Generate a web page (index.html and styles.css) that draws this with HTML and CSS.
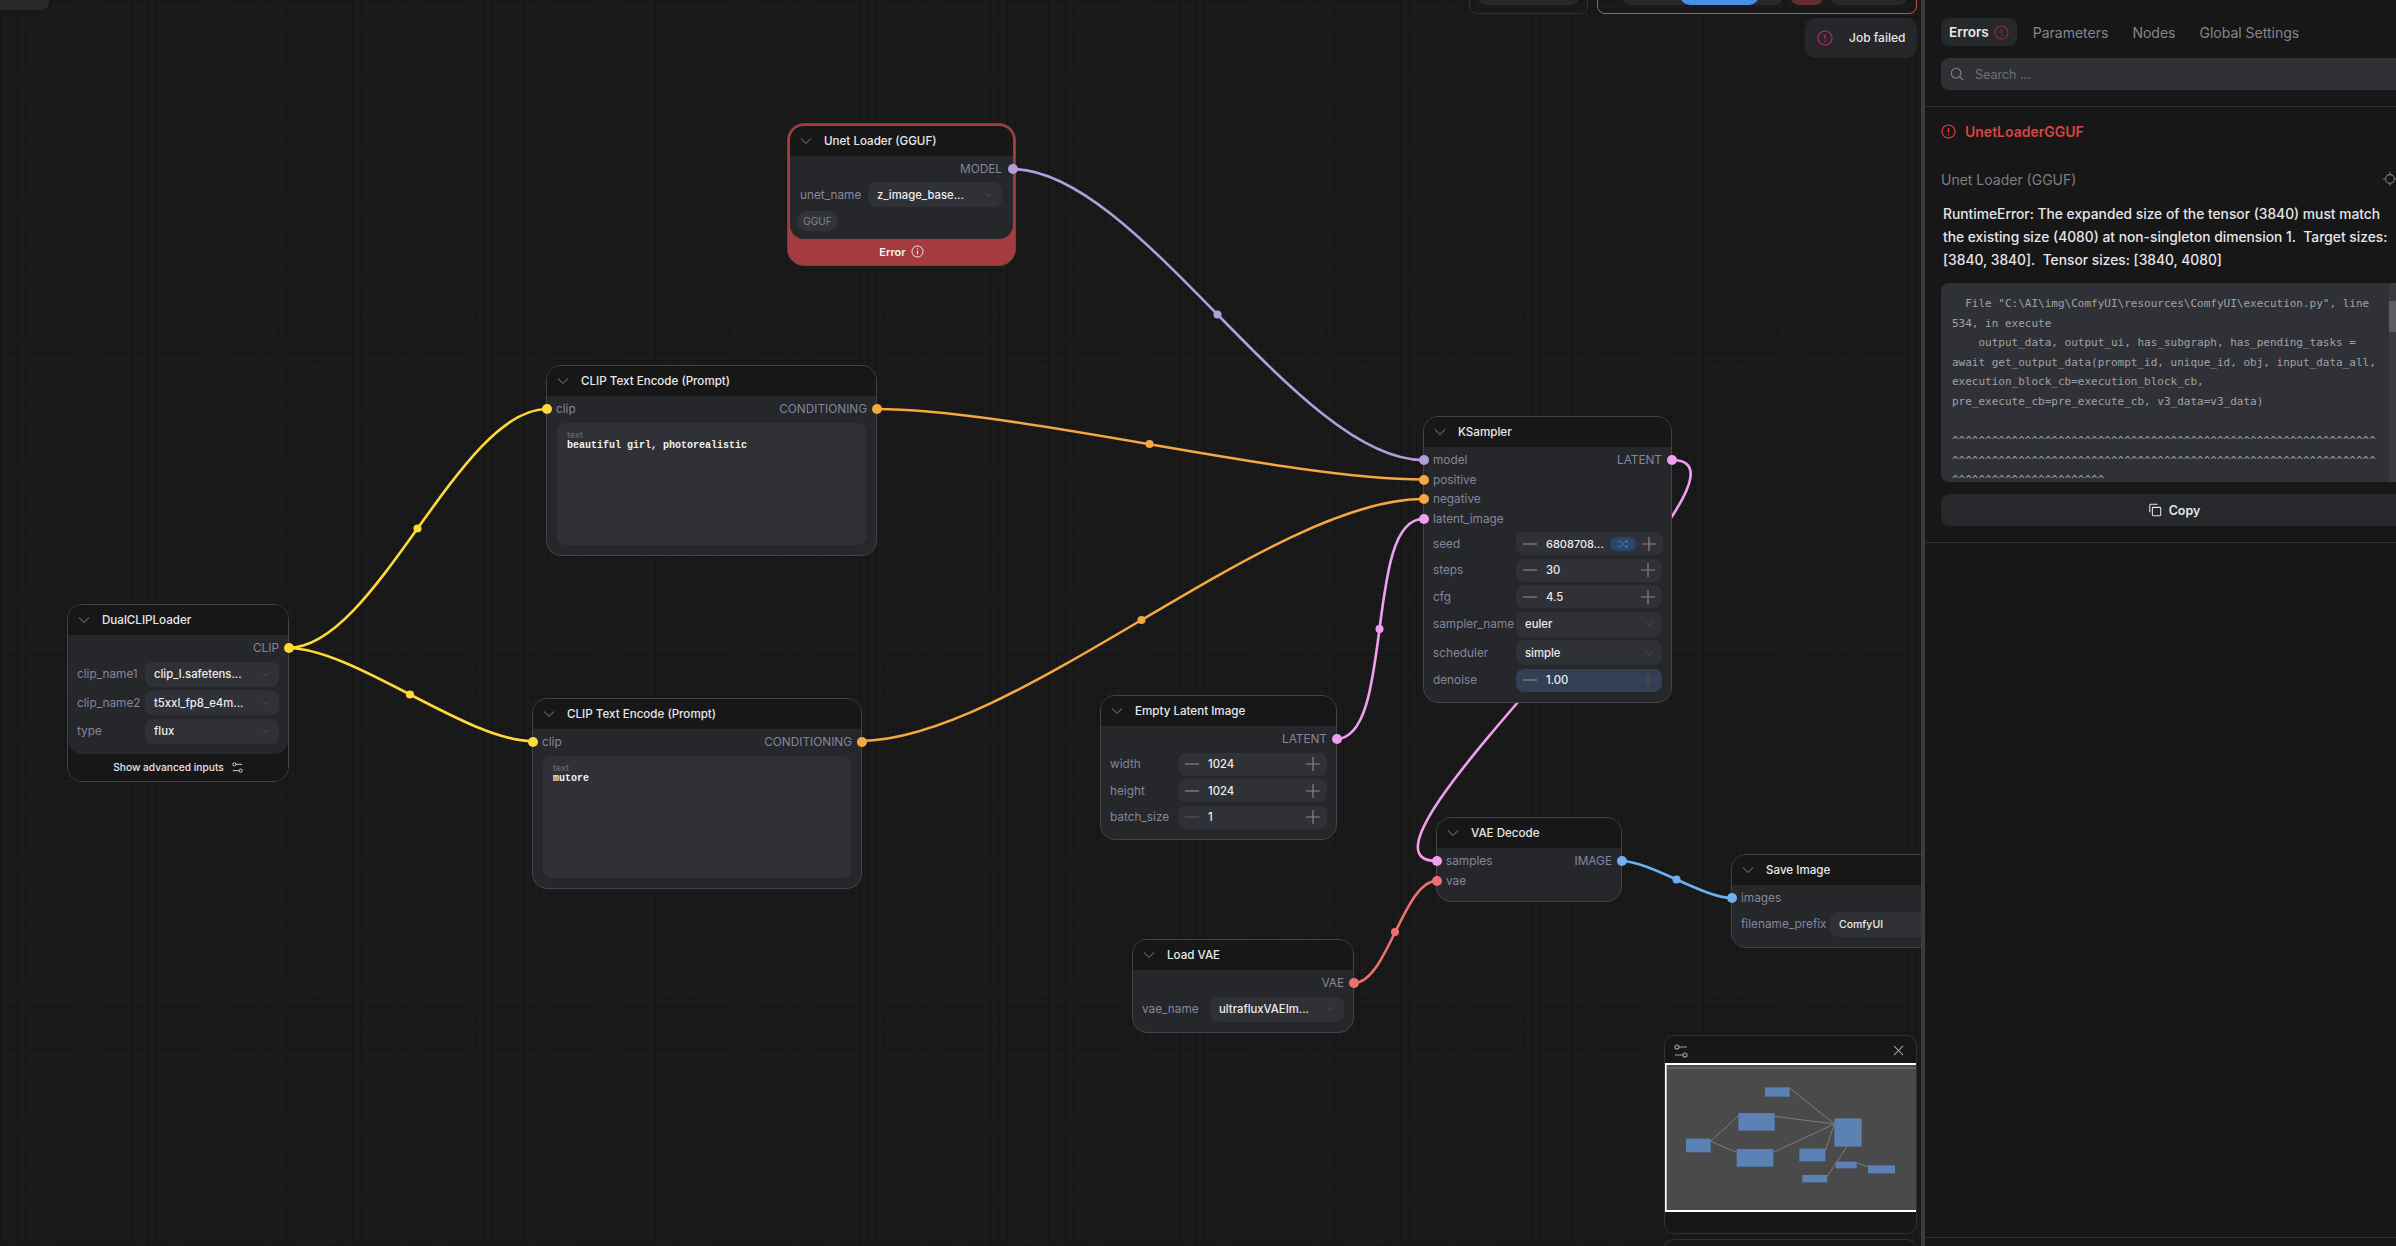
FILE: index.html
```html
<!DOCTYPE html>
<html lang="en">
<head>
  <meta charset="UTF-8">
  <title>ComfyUI</title>
  <link rel="stylesheet" href="styles.css">
</head>
<body>
<svg class="icon-defs" width="0" height="0">
  <symbol id="i-chev" viewBox="0 0 12 8"><path d="M1 1.5 6 6.5 11 1.5" fill="none" stroke="currentColor" stroke-width="1.2"/></symbol>
  <symbol id="i-minus" viewBox="0 0 14 14"><path d="M0 7H14" stroke="currentColor" stroke-width="1.2"/></symbol>
  <symbol id="i-plus" viewBox="0 0 14 14"><path d="M0 7H14M7 0V14" stroke="currentColor" stroke-width="1.2"/></symbol>
  <symbol id="i-alert" viewBox="0 0 16 16"><circle cx="8" cy="8" r="7" fill="none" stroke="currentColor" stroke-width="1.2"/><path d="M8 4.2V9" stroke="currentColor" stroke-width="1.4"/><circle cx="8" cy="11.4" r=".8" fill="currentColor"/></symbol>
  <symbol id="i-sliders" viewBox="0 0 14 14"><g fill="none" stroke="currentColor" stroke-width="1.1"><circle cx="3" cy="3" r="2"/><circle cx="11" cy="11" r="2"/><path d="M5 3H13M1 11H9"/></g></symbol>
</svg>

<div class="app">
  <main class="canvas">
    <!-- wires sit under the nodes -->
    <svg class="wires" width="1921" height="1246">
      <g fill="none" stroke-width="2.6">
        <path stroke="#b39ddb" d="M1012 169C1138 169 1297 460 1423 460"/>
        <path stroke="#ffd83a" d="M288 648C376 648 459 409 547 409"/>
        <path stroke="#ffd83a" d="M288 648C353 648 467 741 532 741"/>
        <path stroke="#f5a742" d="M876 409C1014 409 1285 479.5 1423 479.5"/>
        <path stroke="#f5a742" d="M860 741C1013 741 1270 499 1423 499"/>
        <path stroke="#f09ff0" d="M1336 739C1395 739 1364 519 1423 519"/>
        <path stroke="#f09ff0" d="M1672 460C1788 460 1320.5 861 1436.5 861"/>
        <path stroke="#ef6f6f" d="M1354 983C1387 983 1403.5 881 1436.5 881"/>
        <path stroke="#6fb0ef" d="M1621 861C1650 861 1703 898 1732 898"/>
      </g>
      <circle cx="1217.5" cy="314.5" r="4" fill="#b39ddb"/>
      <circle cx="417.5" cy="528.5" r="4" fill="#ffd83a"/>
      <circle cx="410" cy="694.5" r="4" fill="#ffd83a"/>
      <circle cx="1149.5" cy="444" r="4" fill="#f5a742"/>
      <circle cx="1141.5" cy="620" r="4" fill="#f5a742"/>
      <circle cx="1379.5" cy="629" r="4" fill="#f09ff0"/>
      <circle cx="1395" cy="932" r="4" fill="#ef6f6f"/>
      <circle cx="1676.5" cy="879.5" r="4" fill="#6fb0ef"/>
    </svg>

    <!-- things cut off by the top of the window -->
    <div class="top-stub top-left"></div>
    <div class="top-box top-mid"><div class="stub stub-wide"></div></div>
    <div class="top-box top-run">
      <div class="stub stub-run"><div class="stub-blue"></div></div>
      <div class="stub stub-red"></div>
      <div class="stub stub-end"></div>
    </div>

    <div class="toast">
      <svg class="toast-icon"><use href="#i-alert"/></svg>
      <span>Job failed</span>
    </div>

    <div class="node node-error n-unet">
      <div class="node-head"><svg class="chev"><use href="#i-chev"/></svg><span>Unet Loader (GGUF)</span></div>
      <div class="node-body">
        <div class="port-row"><span></span><span>MODEL<i class="dot c-model dot-out"></i></span></div>
        <div class="widget-row row-tall">
          <label>unet_name</label>
          <div class="widget select"><span>z_image_base...</span><svg class="chev-sm"><use href="#i-chev"/></svg></div>
        </div>
        <div class="tag">GGUF</div>
      </div>
      <div class="error-foot"><span>Error</span><svg class="foot-icon" viewBox="0 0 16 16"><circle cx="8" cy="8" r="6.8" fill="none" stroke="currentColor" stroke-width="1.2"/><path d="M8 7V11.5" stroke="currentColor" stroke-width="1.4"/><circle cx="8" cy="4.8" r=".8" fill="currentColor"/></svg></div>
    </div>

    <div class="node n-dual">
      <div class="node-head"><svg class="chev"><use href="#i-chev"/></svg><span>DualCLIPLoader</span></div>
      <div class="node-body">
        <div class="port-row"><span></span><span>CLIP<i class="dot c-clip dot-out"></i></span></div>
        <div class="widget-row row-tall"><label>clip_name1</label><div class="widget select"><span>clip_l.safetens...</span><svg class="chev-sm"><use href="#i-chev"/></svg></div></div>
        <div class="widget-row row-tall"><label>clip_name2</label><div class="widget select"><span>t5xxl_fp8_e4m...</span><svg class="chev-sm"><use href="#i-chev"/></svg></div></div>
        <div class="widget-row row-tall"><label>type</label><div class="widget select"><span>flux</span><svg class="chev-sm"><use href="#i-chev"/></svg></div></div>
      </div>
      <div class="adv-foot"><span>Show advanced inputs</span><svg><use href="#i-sliders"/></svg></div>
    </div>

    <div class="node n-clip1">
      <div class="node-head"><svg class="chev"><use href="#i-chev"/></svg><span>CLIP Text Encode (Prompt)</span></div>
      <div class="node-body">
        <div class="port-row"><span><i class="dot c-clip dot-in"></i>clip</span><span>CONDITIONING<i class="dot c-cond dot-out"></i></span></div>
        <div class="prompt"><small>text</small><p>beautiful girl, photorealistic</p></div>
      </div>
    </div>

    <div class="node n-clip2">
      <div class="node-head"><svg class="chev"><use href="#i-chev"/></svg><span>CLIP Text Encode (Prompt)</span></div>
      <div class="node-body">
        <div class="port-row"><span><i class="dot c-clip dot-in"></i>clip</span><span>CONDITIONING<i class="dot c-cond dot-out"></i></span></div>
        <div class="prompt"><small>text</small><p>mutore</p></div>
      </div>
    </div>

    <div class="node n-sampler">
      <div class="node-head"><svg class="chev"><use href="#i-chev"/></svg><span>KSampler</span></div>
      <div class="node-body">
        <div class="port-row"><span><i class="dot c-model dot-in"></i>model</span><span>LATENT<i class="dot c-latent dot-out"></i></span></div>
        <div class="port-row"><span><i class="dot c-cond dot-in"></i>positive</span></div>
        <div class="port-row"><span><i class="dot c-cond dot-in"></i>negative</span></div>
        <div class="port-row"><span><i class="dot c-latent dot-in"></i>latent_image</span></div>
        <div class="widget-row"><label>seed</label>
          <div class="widget number"><svg class="step"><use href="#i-minus"/></svg><span class="seed">6808708...</span>
            <b class="shuffle"><svg viewBox="0 0 16 12"><path d="M1 2.5H4.5L10.5 9.5H14M1 9.5H4.5L6.5 7.2M8.5 4.8 10.5 2.5H14M12 .6 14.6 2.5 12 4.4M12 7.6 14.6 9.5 12 11.4" fill="none" stroke="currentColor" stroke-width="1.2"/></svg></b>
            <svg class="step"><use href="#i-plus"/></svg></div></div>
        <div class="widget-row"><label>steps</label><div class="widget number"><svg class="step"><use href="#i-minus"/></svg><span>30</span><svg class="step"><use href="#i-plus"/></svg></div></div>
        <div class="widget-row"><label>cfg</label><div class="widget number"><svg class="step"><use href="#i-minus"/></svg><span>4.5</span><svg class="step"><use href="#i-plus"/></svg></div></div>
        <div class="widget-row row-tall"><label>sampler_name</label><div class="widget select"><span>euler</span><svg class="chev-sm"><use href="#i-chev"/></svg></div></div>
        <div class="widget-row row-tall"><label>scheduler</label><div class="widget select"><span>simple</span><svg class="chev-sm"><use href="#i-chev"/></svg></div></div>
        <div class="widget-row"><label>denoise</label><div class="widget number widget-focus"><svg class="step"><use href="#i-minus"/></svg><span>1.00</span><svg class="step step-off"><use href="#i-plus"/></svg></div></div>
      </div>
    </div>

    <div class="node n-latent">
      <div class="node-head"><svg class="chev"><use href="#i-chev"/></svg><span>Empty Latent Image</span></div>
      <div class="node-body">
        <div class="port-row"><span></span><span>LATENT<i class="dot c-latent dot-out"></i></span></div>
        <div class="widget-row"><label>width</label><div class="widget number"><svg class="step"><use href="#i-minus"/></svg><span>1024</span><svg class="step"><use href="#i-plus"/></svg></div></div>
        <div class="widget-row"><label>height</label><div class="widget number"><svg class="step"><use href="#i-minus"/></svg><span>1024</span><svg class="step"><use href="#i-plus"/></svg></div></div>
        <div class="widget-row"><label>batch_size</label><div class="widget number"><svg class="step step-off"><use href="#i-minus"/></svg><span>1</span><svg class="step"><use href="#i-plus"/></svg></div></div>
      </div>
    </div>

    <div class="node n-decode">
      <div class="node-head"><svg class="chev"><use href="#i-chev"/></svg><span>VAE Decode</span></div>
      <div class="node-body">
        <div class="port-row"><span><i class="dot c-latent dot-in"></i>samples</span><span>IMAGE<i class="dot c-image dot-out"></i></span></div>
        <div class="port-row"><span><i class="dot c-vae dot-in"></i>vae</span></div>
      </div>
    </div>

    <div class="node n-loadvae">
      <div class="node-head"><svg class="chev"><use href="#i-chev"/></svg><span>Load VAE</span></div>
      <div class="node-body">
        <div class="port-row"><span></span><span>VAE<i class="dot c-vae dot-out"></i></span></div>
        <div class="widget-row row-tall"><label>vae_name</label><div class="widget select"><span>ultrafluxVAEIm...</span><svg class="chev-sm"><use href="#i-chev"/></svg></div></div>
      </div>
    </div>

    <div class="node n-save">
      <div class="node-head"><svg class="chev"><use href="#i-chev"/></svg><span>Save Image</span></div>
      <div class="node-body">
        <div class="port-row"><span><i class="dot c-image dot-in"></i>images</span></div>
        <div class="widget-row row-tall"><label>filename_prefix</label><div class="widget select"><span>ComfyUI</span></div></div>
      </div>
    </div>

    <div class="minimap">
      <div class="minimap-head">
        <svg class="map-tool"><use href="#i-sliders"/></svg>
        <svg class="map-close" viewBox="0 0 12 12"><path d="M1 1 11 11M11 1 1 11" stroke="currentColor" stroke-width="1.1"/></svg>
      </div>
      <svg class="map-view" viewBox="75 130 753 447">
        <rect x="75" y="130" width="753" height="447" fill="#fff"/>
        <rect x="80" y="136" width="748" height="435" fill="#4a4a4a"/>
        <path d="M80 145H828" stroke="#777" stroke-width="3"/>
        <g fill="#5b82b5">
          <rect x="375" y="203" width="74" height="28"/>
          <rect x="295" y="280" width="109" height="53"/>
          <rect x="138" y="357" width="74" height="41"/>
          <rect x="290" y="388" width="110" height="53"/>
          <rect x="478" y="387" width="78" height="38"/>
          <rect x="583" y="296" width="82" height="85"/>
          <rect x="587" y="426" width="63" height="20"/>
          <rect x="684" y="437" width="81" height="24"/>
          <rect x="487" y="466" width="75" height="22"/>
        </g>
        <path d="M449 205 583 313M404 290 583 313M212 365 295 288M212 365 290 398M400 398 583 313M556 393 583 313M665 313 562 470M650 430 684 441" fill="none" stroke="#7d7d7d" stroke-width="3"/>
      </svg>
    </div>
    <div class="minimap-next"></div>
  </main>

  <aside class="panel">
    <div class="panel-top">
      <nav class="tabs">
        <a class="tab tab-on">Errors<svg class="tab-icon"><use href="#i-alert"/></svg></a>
        <a class="tab">Parameters</a>
        <a class="tab">Nodes</a>
        <a class="tab">Global Settings</a>
      </nav>
      <div class="search">
        <svg viewBox="0 0 16 16"><circle cx="7" cy="7" r="5.5" fill="none" stroke="currentColor" stroke-width="1.2"/><path d="M11 11 15 15" stroke="currentColor" stroke-width="1.2"/></svg>
        <span>Search ...</span>
      </div>
    </div>
    <section class="errors">
      <h2><svg><use href="#i-alert"/></svg>UnetLoaderGGUF</h2>
      <div class="err-node">
        <span>Unet Loader (GGUF)</span>
        <svg viewBox="0 0 16 16"><g fill="none" stroke="currentColor" stroke-width="1.2"><circle cx="8" cy="8" r="5"/><path d="M8 0V3M8 13V16M0 8H3M13 8H16"/></g></svg>
      </div>
      <p class="err-msg">RuntimeError: The expanded size of the tensor (3840) must match the existing size (4080) at non-singleton dimension 1.&nbsp; Target sizes: [3840, 3840].&nbsp; Tensor sizes: [3840, 4080]</p>
      <div class="trace">
        <pre>  File "C:\AI\img\ComfyUI\resources\ComfyUI\execution.py", line
534, in execute
    output_data, output_ui, has_subgraph, has_pending_tasks =
await get_output_data(prompt_id, unique_id, obj, input_data_all,
execution_block_cb=execution_block_cb,
pre_execute_cb=pre_execute_cb, v3_data=v3_data)

^^^^^^^^^^^^^^^^^^^^^^^^^^^^^^^^^^^^^^^^^^^^^^^^^^^^^^^^^^^^^^^^
^^^^^^^^^^^^^^^^^^^^^^^^^^^^^^^^^^^^^^^^^^^^^^^^^^^^^^^^^^^^^^^^
^^^^^^^^^^^^^^^^^^^^^^^</pre>
        <div class="scrollbar"><div class="thumb"></div></div>
      </div>
      <button class="copy">
        <svg viewBox="0 0 16 16"><g fill="none" stroke="currentColor" stroke-width="1.2"><rect x="5" y="5" width="9.5" height="9.5" rx="1"/><path d="M2 10.5V3A1.5 1.5 0 0 1 3.500 1.500H11"/></g></svg>
        Copy
      </button>
    </section>
    <div class="panel-fill"></div>
  </aside>
</div>
</body>
</html>
```
FILE: styles.css
```css
* { margin: 0; padding: 0; box-sizing: border-box; }
html, body { height: 100%; overflow: hidden; background: #19191a; font-family: Inter, "Liberation Sans", sans-serif; color: #e6e6e8; }
.icon-defs { position: absolute; }

.app { display: flex; height: 1246px; width: 2396px; overflow: hidden; }

/* canvas */
.canvas {
  position: relative;
  flex: 0 0 1921px;
  overflow: hidden;
  background-color: #1a1a1b;
  background-image:
    linear-gradient(#141415 1px, transparent 1px),
    linear-gradient(90deg, #141415 1px, transparent 1px);
  background-size: 8.2px 8.2px;
}
.wires { position: absolute; left: 0; top: 0; }

.top-stub { position: absolute; left: 0; top: 0; width: 49px; height: 10px; background: #27282c; border-radius: 0 0 8px 0; }
.top-box { position: absolute; top: -10px; height: 24px; display: flex; align-items: flex-end; gap: 8px; padding: 0 8px 8px; border-radius: 0 0 8px 8px; }
.top-mid { left: 1469px; width: 119px; border: 1px solid #303134; }
.top-run { left: 1597px; width: 320px; border: 1px solid #c54f4f; padding-left: 25px; }
.stub { height: 16px; background: #27282c; border-radius: 0 0 8px 8px; }
.stub-wide { width: 101px; }
.stub-run { width: 160px; position: relative; }
.stub-blue { position: absolute; left: 57px; width: 79px; height: 16px; background: #4a8fe6; border-radius: 0 0 10px 10px; }
.stub-red { width: 32px; background: #642c2f; }
.stub-end { width: 76px; }

.toast { position: absolute; left: 1805px; top: 18px; width: 112px; height: 40px; display: flex; align-items: center; gap: 16px; padding: 0 0 1px 12px; background: #26272b; border-radius: 10px; font-size: 12px; font-weight: 500; }
.toast-icon { width: 16px; height: 16px; color: #c2265f; }

/* nodes */
.node { position: absolute; background: #26272b; border: 1px solid #424348; border-radius: 15px; font-size: 11.800px; }
.node-head { display: flex; align-items: center; height: 30px; padding-left: 10px; background: #171718; border-radius: 14px 14px 0 0; font-size: 11.600px; font-weight: 500; color: #e8e8ea; }
.chev { width: 12px; height: 8px; margin-right: 12px; color: #55566a; }
.node-body { padding: 3.500px 0 6.500px; }
.port-row { position: relative; display: flex; justify-content: space-between; align-items: center; height: 19.500px; padding: 0 9px; color: #85869c; }
.port-row + .widget-row { margin-top: 3.500px; }
.dot { position: absolute; top: 50%; width: 10px; height: 10px; margin-top: -5px; border-radius: 50%; }
.dot-in { left: -5px; }
.dot-out { right: -6px; }
.c-model { background: #b39ddb; }
.c-clip { background: #ffd83a; }
.c-cond { background: #f5a742; }
.c-latent { background: #f09ff0; }
.c-vae { background: #ef6f6f; }
.c-image { background: #6fb0ef; }

.widget-row { display: grid; grid-template-columns: var(--label-w) 1fr; align-items: center; height: 23px; margin: 0 9px 3.500px; color: #85869c; }
.row-tall { height: 25px; }
.widget { display: flex; align-items: center; height: 100%; background: #303136; border-radius: 8px; color: #ececee; font-size: 11.300px; font-weight: 500; }
.select { justify-content: space-between; padding: 0 9px; }
.select span, .number span { white-space: nowrap; }
.chev-sm { width: 8px; height: 6px; color: #55565c; flex-shrink: 0; }
.number { padding: 0 7px; gap: 9px; }
.number span { flex: 1; }
.number .seed { font-size: 11px; }
.step { width: 14px; height: 14px; color: #85868c; flex-shrink: 0; }
.step-off { color: #4d4e54; }
.widget-focus { background: #333f52; }
.shuffle { display: flex; align-items: center; justify-content: center; flex-shrink: 0; width: 26px; height: 14px; margin: 0 -3px; background: #2c4468; border-radius: 7px; color: #3f80d8; }
.shuffle svg { width: 12px; height: 10px; }

.tag { width: 41px; height: 20px; margin: 0 0 0 7px; line-height: 20px; text-align: center; background: #323338; border-radius: 10px; color: #85868c; font-size: 10px; }

.prompt { height: 122px; margin: 3.500px 10px 0; padding: 6px 10px; background: #303136; border-radius: 8px; }
.prompt small { display: block; font-size: 9px; color: #6c6d72; line-height: 11px; }
.prompt p { font: bold 10px/11px "Liberation Mono", monospace; color: #f2f2f2; }

.node-error { background: #a33b3f; border-color: #6e4448; padding: 2px 2px 0; border-radius: 17px; }
.node-error .node-body { background: #26272b; border-radius: 0 0 14px 14px; padding-bottom: 8px; }
.node-error .widget-row { margin: 3px 11px 3.500px 10px; }
.node-error .port-row { padding-right: 11px; }
.node-error .dot-out { right: -5px; }
.error-foot { display: flex; align-items: center; justify-content: center; gap: 5px; height: 26px; font-size: 11px; font-weight: 600; color: #f4f4f4; }
.foot-icon { width: 13px; height: 13px; }
.adv-foot { display: flex; align-items: center; justify-content: center; gap: 8px; height: 27px; background: #171718; border-radius: 0 0 14px 14px; font-size: 10.200px; font-weight: 500; color: #e6e6e8; }
.adv-foot svg { width: 11px; height: 11px; }
.n-dual { background: #171718; }
.n-dual .node-body { background: #26272b; border-radius: 0 0 14px 14px; }

.n-unet { left: 787px; top: 123px; width: 229px; --label-w: 68px; }
.n-dual { left: 67px; top: 604px; width: 222px; --label-w: 68px; }
.n-clip1 { left: 546px; top: 365px; width: 331px; }
.n-clip2 { left: 532px; top: 698px; width: 330px; }
.n-sampler { left: 1423px; top: 416px; width: 249px; --label-w: 83px; }
.n-latent { left: 1100px; top: 695px; width: 237px; --label-w: 68px; }
.n-decode { left: 1436px; top: 817px; width: 186px; }
.n-loadvae { left: 1132px; top: 939px; width: 222px; --label-w: 68px; }
.n-save { left: 1731px; top: 854px; width: 250px; --label-w: 89px; }
.n-save .widget { font-size: 10.500px; }
.n-clip1 .node-body, .n-clip2 .node-body, .n-decode .node-body { padding-bottom: 10px; }

/* minimap */
.minimap { position: absolute; left: 1664px; top: 1035px; width: 253px; height: 199px; background: #171718; border: 1px solid #303134; border-radius: 10px; }
.minimap-head { display: flex; justify-content: space-between; align-items: center; height: 27px; padding: 2px 12px 0 9px; color: #a0a1a6; }
.map-tool { width: 14px; height: 14px; }
.map-close { width: 11px; height: 11px; }
.map-view { display: block; width: 251px; height: 149px; }
.minimap-next { position: absolute; left: 1664px; top: 1239px; width: 253px; height: 20px; background: #171718; border: 1px solid #303134; border-radius: 10px 10px 0 0; }

/* right panel */
.panel { display: flex; flex-direction: column; flex: 0 0 498px; background: #171718; border-left: 4px solid #3a3b40; font-size: 14px; }
.panel-top { padding: 18px 16px 16px; border-bottom: 1px solid #303134; }
.tabs { display: flex; gap: 8px; height: 28px; align-items: center; }
.tab { display: flex; align-items: center; height: 28px; padding: 0 8px; border-radius: 8px; color: #85868c; font-size: 14px; }
.tab-on { background: #27282c; color: #e8e8ea; font-size: 13.500px; font-weight: 600; gap: 5px; }
.tab-icon { width: 15px; height: 15px; color: #8f2c30; }
.search { display: flex; align-items: center; gap: 11px; height: 32px; margin-top: 12px; padding-left: 9px; background: #303136; border-radius: 8px; color: #85868c; font-size: 12.500px; }
.search svg { width: 14px; height: 14px; }
.search span { color: #6f7076; }

.errors { padding: 15px 16px 16px; border-bottom: 1px solid #303134; }
.errors h2 { display: flex; align-items: center; gap: 9px; height: 18px; font-size: 14px; font-weight: 600; color: #d94444; }
.errors h2 svg { width: 15px; height: 15px; }
.err-node { display: flex; justify-content: space-between; align-items: center; height: 20px; margin-top: 29px; color: #7d7e85; font-size: 14px; }
.err-node svg { width: 14px; height: 14px; margin-right: 10px; margin-left: auto; }
.err-msg { margin: 14px 0 0 2px; width: 450px; font-size: 13.800px; line-height: 23px; font-weight: 500; color: #e6e6e8; }
.trace { position: relative; height: 199px; width: 466px; margin-top: 11px; overflow: hidden; background: #303136; border-radius: 8px; }
.trace pre { padding: 11px 11px; font: 11px/19.600px "DejaVu Sans Mono", monospace; color: #a0a1a6; }
.scrollbar { position: absolute; left: 448px; top: 0; bottom: 0; width: 7px; background: #3a3b40; }
.thumb { position: absolute; left: 0; top: 18px; width: 7px; height: 31px; background: #5c5d62; }
.copy { display: flex; align-items: center; justify-content: center; gap: 7px; width: 466px; height: 32px; margin-top: 12px; background: #27282c; border: 0; border-radius: 8px; font: 600 12.500px Inter, sans-serif; color: #e6e6e8; }
.copy svg { width: 14px; height: 14px; }
.panel-fill { flex: 1; border-bottom: 1px solid #303134; margin-bottom: 8px; }
```
